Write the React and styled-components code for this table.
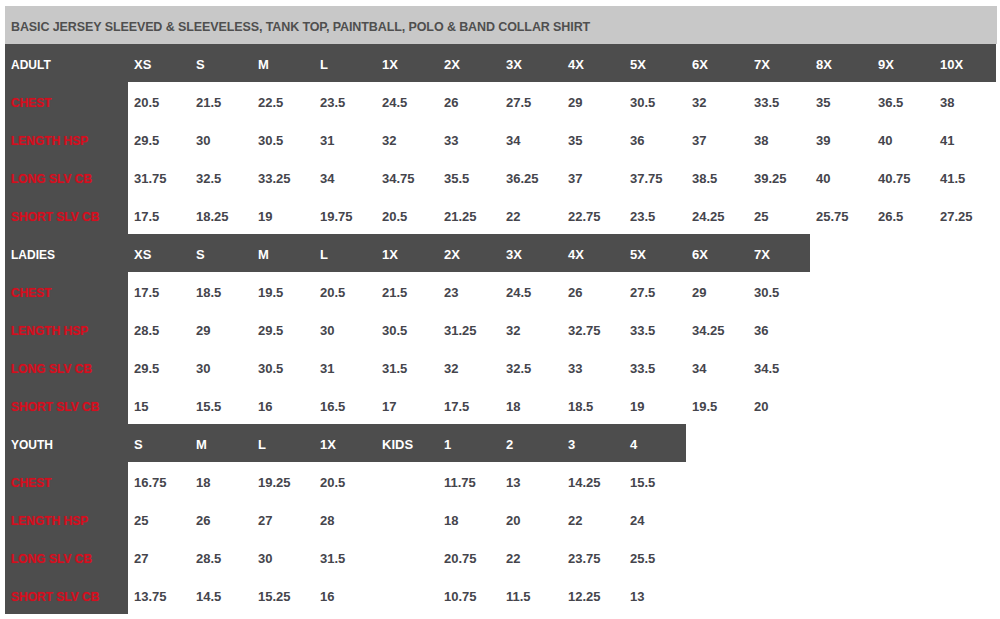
import React from "react";
import styled, { createGlobalStyle } from "styled-components";

const GlobalStyle = createGlobalStyle`
  html, body {
    margin: 0;
    padding: 0;
    background: #ffffff;
  }
  body {
    font-family: "Liberation Sans", Arial, sans-serif;
  }
`;

const Chart = styled.div`
  width: 992px;
  padding: 6px 0 0 5px;
`;

const Title = styled.div`
  height: 38px;
  box-sizing: border-box;
  padding: 4px 0 0 6px;
  background: #c8c8c8;
  display: flex;
  align-items: center;
  font-size: 12.5px;
  font-weight: bold;
  color: #4f4f4f;
  letter-spacing: -0.1px;
`;

const Row = styled.div`
  display: flex;
  align-items: stretch;
  height: 38px;
  width: ${(props) => (props.$header ? "fit-content" : "100%")};
  background: ${(props) => (props.$header ? "#4d4d4d" : "transparent")};
`;

const Label = styled.div`
  width: 117px;
  flex-shrink: 0;
  box-sizing: content-box;
  padding: 3px 0 0 6px;
  display: flex;
  align-items: center;
  background: #4d4d4d;
  font-size: 12px;
  font-weight: bold;
  color: ${(props) => (props.$header ? "#ffffff" : "#d40e1e")};
  text-shadow: ${(props) =>
    props.$header ? "none" : "0 0 1px rgba(230, 20, 40, 0.6)"};
`;

const Cell = styled.div`
  width: 56px;
  flex-shrink: 0;
  padding: 3px 0 0 6px;
  display: flex;
  align-items: center;
  font-size: 13px;
  font-weight: bold;
  color: ${(props) => (props.$header ? "#ffffff" : "#45454c")};
`;

const sections = [
  {
    name: "ADULT",
    sizes: ["XS", "S", "M", "L", "1X", "2X", "3X", "4X", "5X", "6X", "7X", "8X", "9X", "10X"],
    rows: [
      ["CHEST", ["20.5", "21.5", "22.5", "23.5", "24.5", "26", "27.5", "29", "30.5", "32", "33.5", "35", "36.5", "38"]],
      ["LENGTH HSP", ["29.5", "30", "30.5", "31", "32", "33", "34", "35", "36", "37", "38", "39", "40", "41"]],
      ["LONG SLV CB", ["31.75", "32.5", "33.25", "34", "34.75", "35.5", "36.25", "37", "37.75", "38.5", "39.25", "40", "40.75", "41.5"]],
      ["SHORT SLV CB", ["17.5", "18.25", "19", "19.75", "20.5", "21.25", "22", "22.75", "23.5", "24.25", "25", "25.75", "26.5", "27.25"]],
    ],
  },
  {
    name: "LADIES",
    sizes: ["XS", "S", "M", "L", "1X", "2X", "3X", "4X", "5X", "6X", "7X"],
    rows: [
      ["CHEST", ["17.5", "18.5", "19.5", "20.5", "21.5", "23", "24.5", "26", "27.5", "29", "30.5"]],
      ["LENGTH HSP", ["28.5", "29", "29.5", "30", "30.5", "31.25", "32", "32.75", "33.5", "34.25", "36"]],
      ["LONG SLV CB", ["29.5", "30", "30.5", "31", "31.5", "32", "32.5", "33", "33.5", "34", "34.5"]],
      ["SHORT SLV CB", ["15", "15.5", "16", "16.5", "17", "17.5", "18", "18.5", "19", "19.5", "20"]],
    ],
  },
  {
    name: "YOUTH",
    sizes: ["S", "M", "L", "1X", "KIDS", "1", "2", "3", "4"],
    rows: [
      ["CHEST", ["16.75", "18", "19.25", "20.5", "", "11.75", "13", "14.25", "15.5"]],
      ["LENGTH HSP", ["25", "26", "27", "28", "", "18", "20", "22", "24"]],
      ["LONG SLV CB", ["27", "28.5", "30", "31.5", "", "20.75", "22", "23.75", "25.5"]],
      ["SHORT SLV CB", ["13.75", "14.5", "15.25", "16", "", "10.75", "11.5", "12.25", "13"]],
    ],
  },
];

export default function App() {
  return (
    <>
      <GlobalStyle />
      <Chart>
        <Title>
          BASIC JERSEY SLEEVED &amp; SLEEVELESS, TANK TOP, PAINTBALL, POLO &amp; BAND COLLAR SHIRT
        </Title>
        {sections.map((section) => (
          <React.Fragment key={section.name}>
            <Row $header>
              <Label $header>{section.name}</Label>
              {section.sizes.map((size) => (
                <Cell $header key={size}>
                  {size}
                </Cell>
              ))}
            </Row>
            {section.rows.map(([label, values]) => (
              <Row key={label}>
                <Label>{label}</Label>
                {values.map((value, index) => (
                  <Cell key={`${label}${index}`}>{value}</Cell>
                ))}
              </Row>
            ))}
          </React.Fragment>
        ))}
      </Chart>
    </>
  );
}
